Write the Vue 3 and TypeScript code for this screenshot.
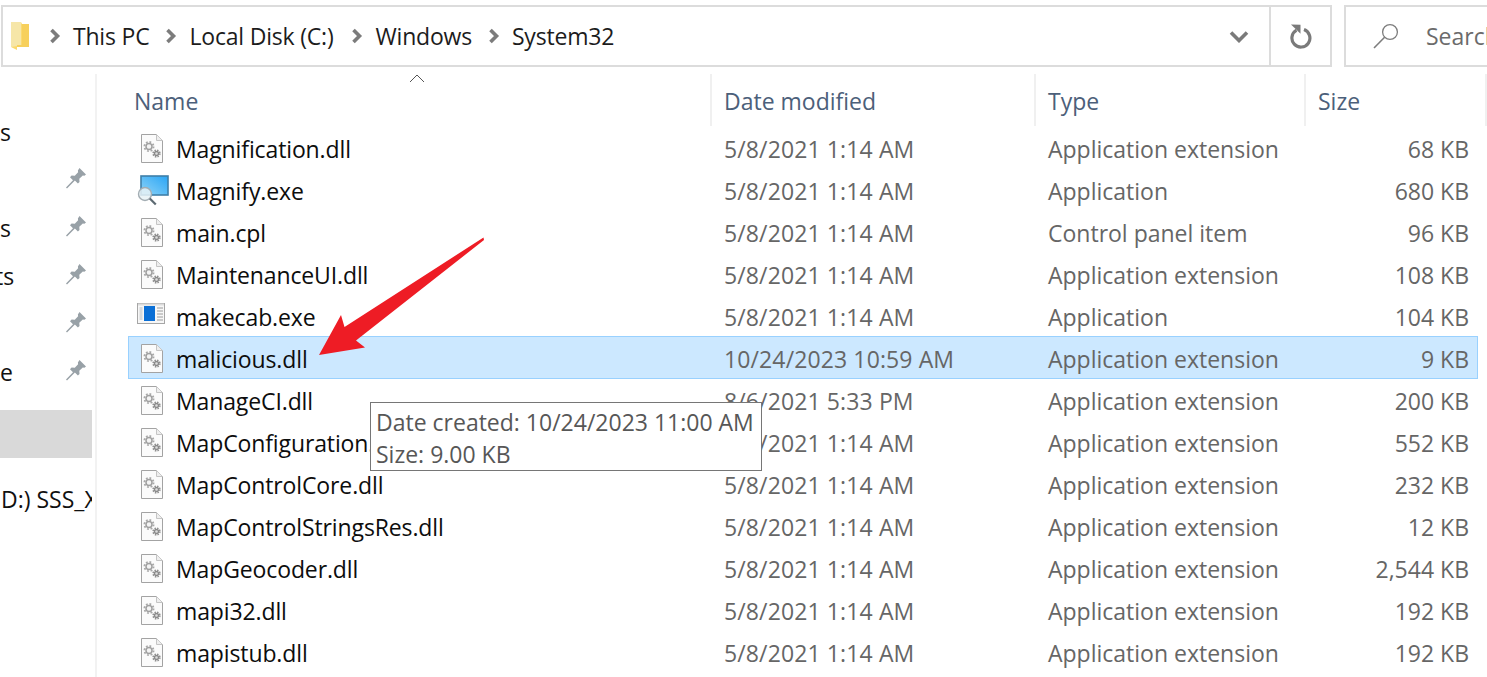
<script setup lang="ts">
interface FileRow {
  name: string
  date: string
  type: string
  size: string
  icon: 'dll' | 'magnify' | 'cab'
  selected?: boolean
}
const d = '5/8/2021 1:14 AM'
const ext = 'Application extension'
const rows: FileRow[] = [
  { name: 'Magnification.dll', date: d, type: ext, size: '68 KB', icon: 'dll' },
  { name: 'Magnify.exe', date: d, type: 'Application', size: '680 KB', icon: 'magnify' },
  { name: 'main.cpl', date: d, type: 'Control panel item', size: '96 KB', icon: 'dll' },
  { name: 'MaintenanceUI.dll', date: d, type: ext, size: '108 KB', icon: 'dll' },
  { name: 'makecab.exe', date: d, type: 'Application', size: '104 KB', icon: 'cab' },
  { name: 'malicious.dll', date: '10/24/2023 10:59 AM', type: ext, size: '9 KB', icon: 'dll', selected: true },
  { name: 'ManageCI.dll', date: '8/6/2021 5:33 PM', type: ext, size: '200 KB', icon: 'dll' },
  { name: 'MapConfiguration.dll', date: d, type: ext, size: '552 KB', icon: 'dll' },
  { name: 'MapControlCore.dll', date: d, type: ext, size: '232 KB', icon: 'dll' },
  { name: 'MapControlStringsRes.dll', date: d, type: ext, size: '12 KB', icon: 'dll' },
  { name: 'MapGeocoder.dll', date: d, type: ext, size: '2,544 KB', icon: 'dll' },
  { name: 'mapi32.dll', date: d, type: ext, size: '192 KB', icon: 'dll' },
  { name: 'mapistub.dll', date: d, type: ext, size: '192 KB', icon: 'dll' },
]
const crumbs = ['This PC', 'Local Disk (C:)', 'Windows', 'System32']
const side = [
  { text: 's', pin: false },
  { text: '', pin: true },
  { text: 's', pin: true },
  { text: 'ts', pin: true, cut: true },
  { text: '', pin: true },
  { text: 'e', pin: true },
]
</script>

<template>
  <div class="page">
    <header class="toolbar">
      <div class="address">
        <svg class="folder" width="20" height="30" viewBox="0 0 20 30">
          <path d="M1 1h10l1 2h7v23H7v3l-6-3z" fill="#fbd96f" />
          <path d="M1 1h10v24H7l-6 1z" fill="#f6e6a8" />
          <path d="M12 3h7v23H7v-2h5z" fill="#f7d05c" />
        </svg>
        <div v-for="c in crumbs" :key="c" class="crumb">
          <svg class="chev" width="12" height="16" viewBox="0 0 12 16">
            <path d="M2.500 2l6 6-6 6" fill="none" stroke="#7c7c7c" stroke-width="3.600" />
          </svg>
          <span>{{ c }}</span>
        </div>
        <svg class="drop" width="20" height="13" viewBox="0 0 20 13">
          <path d="M2 2.500l8 8 8-8" fill="none" stroke="#7a7a7a" stroke-width="3.600" />
        </svg>
      </div>
      <div class="refresh">
        <svg width="24" height="26" viewBox="0 0 24 26">
          <path d="M7.500 7.200a9 9 0 1 0 7.500-.6" fill="none" stroke="#7a7a7a" stroke-width="3.200" />
          <path d="M2 1.500l9.500.2v9z" fill="#7a7a7a" />
        </svg>
      </div>
      <div class="search">
        <svg width="26" height="26" viewBox="0 0 26 26">
          <circle cx="17" cy="9" r="7.400" fill="none" stroke="#7d7d7d" stroke-width="1.300" />
          <path d="M11.600 14.200L1 25" fill="none" stroke="#7d7d7d" stroke-width="1.600" />
        </svg>
        <span>Search</span>
      </div>
    </header>

    <div class="body">
      <nav class="sidebar">
        <div v-for="(s, i) in side" :key="i" class="side-row">
          <span :class="{ cut: s.cut }">{{ s.text }}</span>
          <svg v-if="s.pin" class="pin" width="20" height="21" viewBox="0 0 20 21">
            <path d="M13.500 0L20 6.500l-1.600 1.300-1.600-.3-3.500 3.300.2 3.200-1.600 1.600-3-3L1 20.500 0 19.500l7-7.300-3-3 1.600-1.600 3.200.2 3.300-3.500-.2-1.700z" fill="#98a1a7" />
          </svg>
        </div>
        <div class="side-row active"></div>
        <div class="side-row drive"><span>D:) SSS_X</span></div>
      </nav>

      <main class="files">
        <svg class="sort" width="16" height="9" viewBox="0 0 16 9">
          <path d="M1 8l7-7 7 7" fill="none" stroke="#555" stroke-width="1" />
        </svg>
        <div class="head">
          <div class="hcell first">Name</div>
          <div class="hcell">Date modified</div>
          <div class="hcell">Type</div>
          <div class="hcell">Size</div>
        </div>
        <div v-for="r in rows" :key="r.name" class="row" :class="{ selected: r.selected }">
          <div class="name">
            <span class="icon">
              <svg v-if="r.icon === 'dll'" width="22" height="29" viewBox="0 0 22 29">
                <path d="M.5.5h15l6 6v22H.5z" fill="#fbfbfb" stroke="#a3a3a3" />
                <path d="M15.500.5v6h6" fill="#eee" stroke="#c4c4c4" />
                <circle cx="8" cy="12.500" r="4.600" fill="none" stroke="#a8a8a8" stroke-width="1.800" stroke-dasharray="1.800 1.800" />
                <circle cx="8" cy="12.500" r="3" fill="#f4f4f4" stroke="#a0a0a0" stroke-width="1.500" />
                <circle cx="15.500" cy="19.500" r="3.400" fill="none" stroke="#909090" stroke-width="1.500" stroke-dasharray="1.500 1.200" />
                <circle cx="15.500" cy="19.500" r="2" fill="#dcdcdc" stroke="#8a8a8a" stroke-width="1.300" />
              </svg>
              <svg v-else-if="r.icon === 'magnify'" class="wide" width="33" height="31" viewBox="0 0 33 31">
                <defs>
                  <linearGradient id="screen" x1="0" y1="1" x2="1" y2="0">
                    <stop offset="0" stop-color="#8fd4f7" />
                    <stop offset="1" stop-color="#2aa5f5" />
                  </linearGradient>
                </defs>
                <rect x="5" y="1" width="27" height="19" fill="url(#screen)" stroke="#3f7fa8" stroke-width="1.600" />
                <circle cx="9" cy="19" r="6.500" fill="#e8f2f6" fill-opacity=".85" stroke="#a3adb3" stroke-width="1.400" />
                <path d="M13.800 23.500l6 6" stroke="#5d6a72" stroke-width="2.200" />
              </svg>
              <svg v-else class="wide cab" width="28" height="22" viewBox="0 0 28 22">
                <rect x=".5" y=".5" width="27" height="20" fill="#f7f7f7" stroke="#a6a6a6" />
                <path d="M1 1.500h26" stroke="#dcdcdc" stroke-width="2" />
                <rect x="7" y="3" width="11" height="15" fill="#0a6fd6" />
                <rect x="2.500" y="4" width="3" height="13" fill="#d5d8da" />
                <path d="M20 5h6M20 8h6M20 11h6M20 14h6M20 17h6" stroke="#9c9c9c" stroke-width="1" />
              </svg>
            </span>
            <span class="label">{{ r.name }}</span>
          </div>
          <div class="cell date">{{ r.date }}</div>
          <div class="cell">{{ r.type }}</div>
          <div class="cell size">{{ r.size }}</div>
        </div>
      </main>
    </div>

    <div class="tooltip">
      <div>Date created: 10/24/2023 11:00 AM</div>
      <div>Size: 9.00 KB</div>
    </div>

    <svg class="arrow" width="170" height="122" viewBox="0 0 170 122">
      <path d="M165.500 1.500L166 4 38 104.500 47 111.500 1 119 23 79 26.500 91z" fill="#ee1c25" />
    </svg>
  </div>
</template>

<style scoped>
.page {
  position: relative;
  display: flex;
  flex-direction: column;
  width: 1487px;
  height: 677px;
  overflow: hidden;
  background: #fff;
  font-family: "Open Sans", "Noto Sans", sans-serif;
  font-size: 23px;
  color: #111;
}
.toolbar {
  display: flex;
  flex: none;
  height: 74px;
  padding: 5px 0 7px 1px;
  box-sizing: border-box;
}
.address {
  display: flex;
  flex: none;
  align-items: center;
  width: 1268px;
  padding-left: 7px;
  box-sizing: border-box;
  border: 2px solid #dcdcdc;
  border-right: 0;
}
.folder {
  flex: none;
  margin-right: 16px;
}
.crumb {
  display: flex;
  align-items: center;
  letter-spacing: -0.2px;
  color: #1c1c1c;
  margin-right: 13px;
}
.crumb:nth-child(3) {
  margin-right: 15px;
}
.chev {
  margin: 0 12px 0 3px;
}
.drop {
  margin-left: auto;
  margin-right: 20px;
}
.refresh {
  display: flex;
  flex: none;
  align-items: center;
  justify-content: center;
  width: 63px;
  box-sizing: border-box;
  border: 2px solid #dcdcdc;
}
.search {
  display: flex;
  flex: none;
  width: 200px;
  align-items: center;
  gap: 27px;
  margin-left: 12px;
  padding-left: 27px;
  box-sizing: border-box;
  border: 2px solid #dcdcdc;
  border-right: 0;
  color: #6b6b6b;
}
.body {
  display: flex;
  flex: 1;
  min-height: 0;
}
.sidebar {
  flex: none;
  width: 97px;
  padding-top: 34px;
  box-sizing: border-box;
  border-right: 2px solid #f2f2f2;
  color: #111;
}
.side-row {
  display: flex;
  align-items: center;
  justify-content: space-between;
  width: 92px;
  height: 48px;
  padding-right: 6px;
  box-sizing: border-box;
  overflow: hidden;
  white-space: nowrap;
}
.cut {
  margin-left: -5px;
}
.pin {
  margin-left: auto;
  margin-top: -3px;
}
.active {
  margin-top: 14px;
  background: #d9d9d9;
}
.drive {
  margin-top: 17px;
  padding: 0 0 0 1px;
  justify-content: flex-start;
}
.files {
  position: relative;
  flex: none;
  width: 1390px;
  padding-left: 31px;
  box-sizing: border-box;
}
.sort {
  position: absolute;
  left: 312px;
  top: 0;
}
.head {
  display: grid;
  grid-template-columns: 584px 324px 270px 181px;
  height: 52px;
}
.hcell {
  display: flex;
  align-items: flex-end;
  padding: 0 0 9px 12px;
  border-right: 2px solid #f0f0f0;
  box-sizing: border-box;
  color: #4c607a;
}
.hcell.first {
  padding-left: 6px;
}
.row {
  display: grid;
  grid-template-columns: 583px 324px 270px 173px;
  align-items: center;
  width: 1350px;
  height: 43px;
  margin-bottom: -1px;
  padding-top: 2px;
  box-sizing: border-box;
  border: 1px solid transparent;
}
.row.selected {
  position: relative;
  background: #cce8ff;
  border-color: #99d1ff;
}
.name {
  display: flex;
  align-items: center;
  min-width: 0;
}
.icon {
  display: flex;
  flex: none;
  justify-content: center;
  width: 47px;
}
.icon svg {
  margin: -1px 0 0 -1px;
}
.icon .wide {
  margin: 0;
}
.icon .cab {
  margin: -6px 0 0 -4px;
}
.label {
  white-space: nowrap;
  letter-spacing: -0.12px;
  color: #0d0d0d;
}
.cell {
  padding-left: 12px;
  color: #666;
  white-space: nowrap;
}
.date {
  letter-spacing: 0.12px;
}
.size {
  padding: 0 10px 0 0;
  text-align: right;
}
.tooltip {
  position: absolute;
  left: 370px;
  top: 402px;
  width: 392px;
  height: 69px;
  padding: 3px 0 0 5px;
  box-sizing: border-box;
  border: 1px solid #767676;
  background: #fff;
  color: #575757;
  line-height: 32px;
  white-space: nowrap;
}
.arrow {
  position: absolute;
  left: 318px;
  top: 236px;
}
</style>
